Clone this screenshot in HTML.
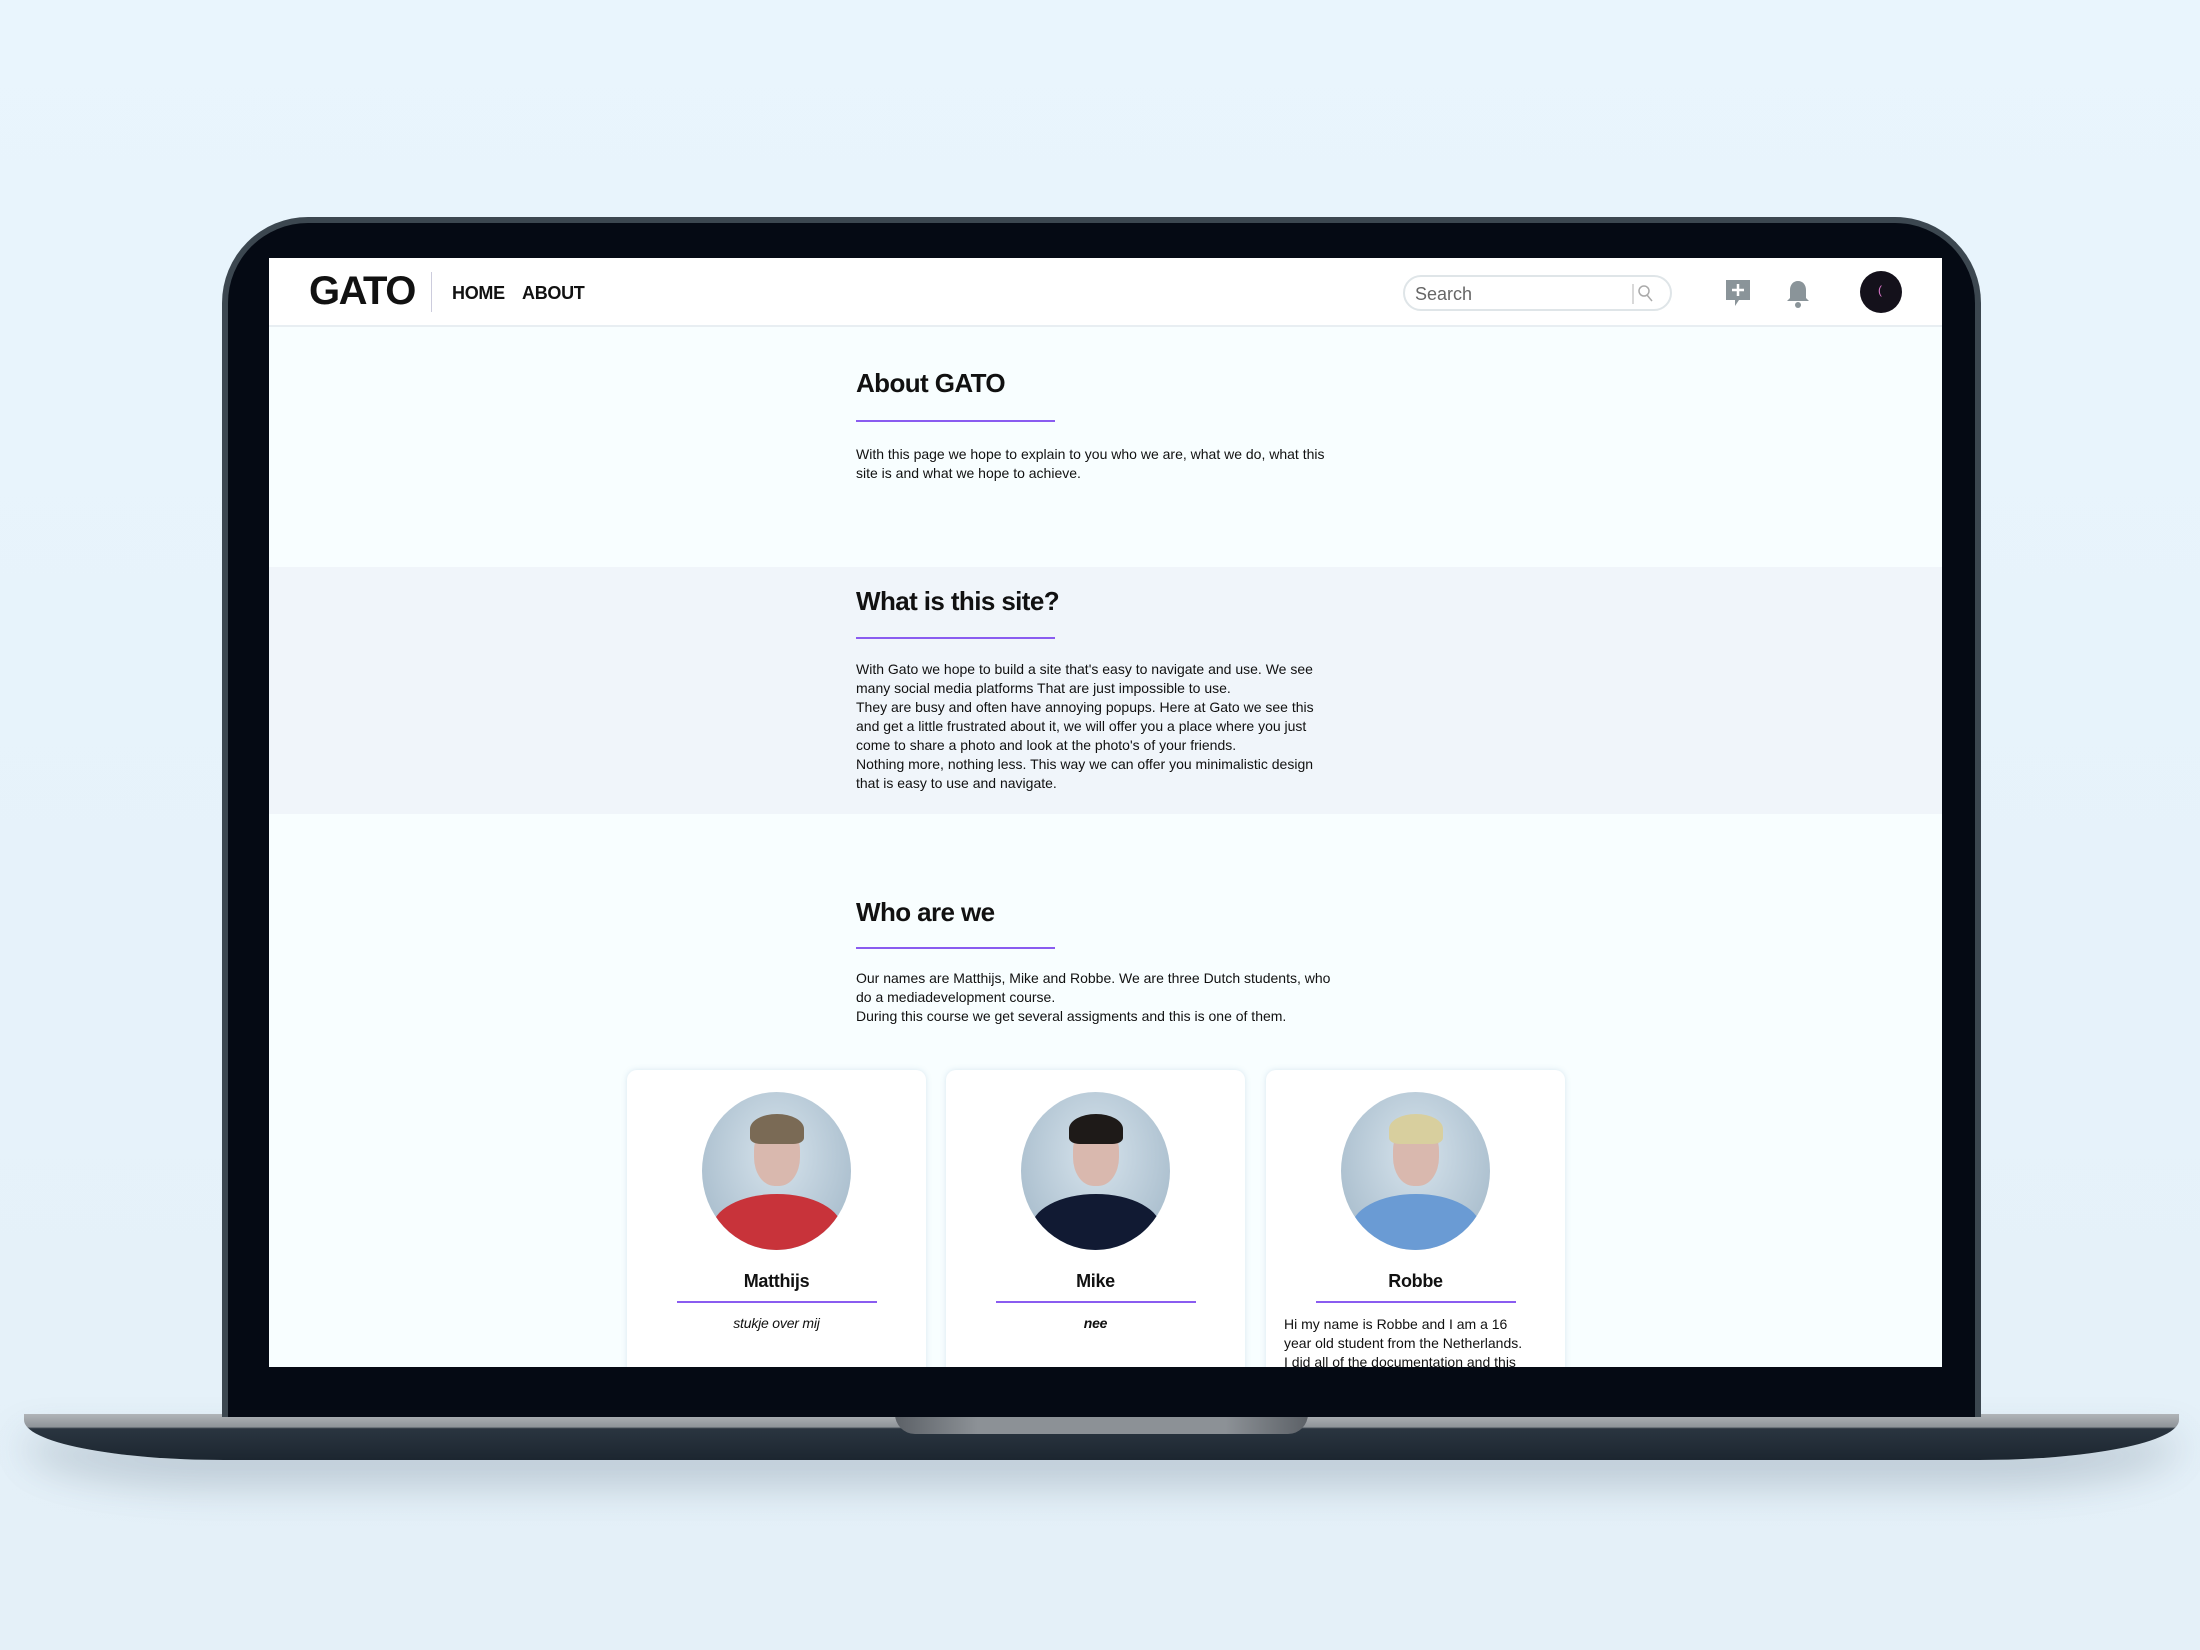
<!DOCTYPE html>
<html><head><meta charset="utf-8"><style>
*{margin:0;padding:0;box-sizing:border-box}
body{width:2200px;height:1650px;overflow:hidden;background:linear-gradient(#e9f5fd,#e4f0f8);font-family:"Liberation Sans",Arial,sans-serif;position:relative;color:#111}
.abs{position:absolute}
#bezel{left:222px;top:217px;width:1759px;height:1200px;background:#050a14;border-radius:86px 86px 0 0;border:6px solid #3c4750;border-bottom:none}
#base{left:24px;top:1414px;width:2155px;height:46px;border-radius:0 0 200px 200px/0 0 40px 40px;background:linear-gradient(#b0b4b8 0,#8f9499 28%,#2a3540 32%,#1c2630 100%);box-shadow:0 25px 40px rgba(60,80,100,.25)}
#notch{left:895px;top:1414px;width:413px;height:20px;background:linear-gradient(90deg,#5c6167,#8c9196 20%,#8c9196 80%,#5c6167);border-radius:0 0 22px 22px}
#screen{left:269px;top:258px;width:1673px;height:1109px;background:#f8feff;overflow:hidden}
#nav{left:0;top:0;width:1673px;height:69px;background:#fff;border-bottom:2px solid #e8eef2}
.logo{left:40px;top:11px;font-size:40px;font-weight:bold;letter-spacing:-1.5px}
.div{left:162px;top:14px;width:1px;height:40px;background:#ccd}
.nl{top:25px;font-size:18px;font-weight:bold;color:#111;letter-spacing:-0.3px}
#search{left:1134px;top:17px;width:269px;height:36px;border:2px solid #dfe5e8;border-radius:18px;font-size:18px;color:#666;padding:7px 10px}
.sec2{left:0;top:309px;width:1673px;height:247px;background:#f0f5fa}
h2{position:absolute;left:587px;font-size:26px;font-weight:bold;letter-spacing:-0.6px}
.ul{position:absolute;left:587px;width:199px;height:2px;background:#8a5cf0}
p.t{position:absolute;left:587px;width:500px;font-size:14px;line-height:19px;color:#111}
.card{top:812px;width:299px;height:320px;background:#fff;border-radius:10px;box-shadow:0 0 6px rgba(120,160,190,.25)}
.ph{position:absolute;left:75px;top:22px;width:149px;height:158px;border-radius:50%;overflow:hidden;background:radial-gradient(ellipse at 50% 40%,#d6e3ec,#9fb5c6)}
.face{position:absolute;left:52px;top:30px;width:46px;height:64px;border-radius:45%;background:#d9b8ae}
.hair{position:absolute;left:48px;top:22px;width:54px;height:30px;border-radius:50% 50% 20% 20%}
.body{position:absolute;left:10px;top:102px;width:130px;height:70px;border-radius:50% 50% 0 0}
.nm{position:absolute;left:0;width:299px;text-align:center;top:201px;font-size:18px;font-weight:bold;letter-spacing:-0.3px}
.cu{position:absolute;left:50px;top:231px;width:200px;height:2px;background:#8a5cf0}
.ct{position:absolute;left:0;width:299px;text-align:center;top:245px;font-size:14px;font-style:italic;letter-spacing:-0.2px}
</style></head><body>
<div class="abs" id="base"></div>
<div class="abs" id="notch"></div>
<div class="abs" id="bezel"></div>
<div class="abs" id="screen">
 <div class="abs" id="nav">
  <div class="abs logo">GATO</div>
  <div class="abs div"></div>
  <div class="abs nl" style="left:183px">HOME</div>
  <div class="abs nl" style="left:253px">ABOUT</div>
  <div class="abs" id="search">Search
   <svg class="abs" style="left:226px;top:6px" width="26" height="22" viewBox="0 0 26 22"><line x1="2" y1="1" x2="2" y2="21" stroke="#ccc" stroke-width="1.5"/><circle cx="13" cy="8" r="5" fill="none" stroke="#aaa" stroke-width="1.5"/><line x1="16" y1="12" x2="21" y2="18" stroke="#aaa" stroke-width="1.5"/></svg>
  </div>
  <svg class="abs" style="left:1456px;top:21px" width="26" height="28" viewBox="0 0 26 28"><path d="M1 1h24v20H14l-4 6v-6H1z" fill="#8a9499"/><path d="M13 5v12M7 11h12" stroke="#fff" stroke-width="2.5"/></svg>
  <svg class="abs" style="left:1516px;top:21px" width="26" height="30" viewBox="0 0 26 30"><path d="M13 2c-5 0-8 4-8 9v8l-3 3h22l-3-3v-8c0-5-3-9-8-9z" fill="#8a9499"/><circle cx="13" cy="26" r="3" fill="#8a9499"/></svg>
  <div class="abs" style="left:1591px;top:13px;width:42px;height:42px;border-radius:50%;background:#14111b"><span style="position:absolute;left:18px;top:12px;color:#d7c;font-size:12px">(</span></div>
 </div>
 <h2 style="top:110px">About GATO</h2>
 <div class="ul" style="top:162px"></div>
 <p class="t" style="top:187px">With this page we hope to explain to you who we are, what we do, what this<br>site is and what we hope to achieve.</p>
 <div class="abs sec2"></div>
 <h2 style="top:328px">What is this site?</h2>
 <div class="ul" style="top:379px"></div>
 <p class="t" style="top:402px">With Gato we hope to build a site that's easy to navigate and use. We see<br>many social media platforms That are just impossible to use.<br>They are busy and often have annoying popups. Here at Gato we see this<br>and get a little frustrated about it, we will offer you a place where you just<br>come to share a photo and look at the photo's of your friends.<br>Nothing more, nothing less. This way we can offer you minimalistic design<br>that is easy to use and navigate.</p>
 <h2 style="top:639px">Who are we</h2>
 <div class="ul" style="top:689px"></div>
 <p class="t" style="top:711px">Our names are Matthijs, Mike and Robbe. We are three Dutch students, who<br>do a mediadevelopment course.<br>During this course we get several assigments and this is one of them.</p>
 <div class="abs card" style="left:358px"><div class="ph"><div class="body" style="background:#c8333a"></div><div class="face"></div><div class="hair" style="background:#7a6a55"></div></div><div class="nm">Matthijs</div><div class="cu"></div><div class="ct">stukje over mij</div></div>
 <div class="abs card" style="left:677px"><div class="ph"><div class="body" style="background:#111a33"></div><div class="face"></div><div class="hair" style="background:#1e1a18"></div></div><div class="nm">Mike</div><div class="cu"></div><div class="ct" style="font-weight:bold">nee</div></div>
 <div class="abs card" style="left:997px"><div class="ph"><div class="body" style="background:#6a9bd4"></div><div class="face"></div><div class="hair" style="background:#d8cf9e"></div></div><div class="nm">Robbe</div><div class="cu"></div><div class="ct" style="font-style:normal;text-align:left;padding:0 10px 0 18px;line-height:19px;letter-spacing:0">Hi my name is Robbe and I am a 16<br>year old student from the Netherlands.<br>I did all of the documentation and this</div></div>
</div>
</body></html>
